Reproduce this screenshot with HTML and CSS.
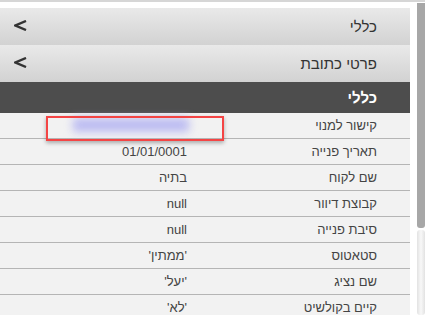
FILE: index.html
```html
<!DOCTYPE html>
<html lang="he">
<head>
    <meta charset="UTF-8">
    <title>פרטי פנייה</title>
    <link rel="stylesheet" href="styles.css">
</head>
<body>
    <div class="frame">
        <div class="panel" dir="rtl">
            <div class="acc-head">
                <span>כללי</span>
                <svg class="chev" width="13" height="11" viewBox="0 0 13 11"><polyline points="12,1 1.5,5.5 12,10" fill="none" stroke="#333" stroke-width="2.4"/></svg>
            </div>
            <div class="acc-head">
                <span>פרטי כתובת</span>
                <svg class="chev" width="13" height="11" viewBox="0 0 13 11"><polyline points="12,1 1.5,5.5 12,10" fill="none" stroke="#333" stroke-width="2.4"/></svg>
            </div>
            <div class="section-title">כללי</div>

            <div class="row">
                <div class="label">קישור למנוי</div>
                <div class="value"><span class="blurred"></span></div>
                <div class="mark"></div>
            </div>
            <div class="row">
                <div class="label">תאריך פנייה</div>
                <div class="value">01/01/0001</div>
            </div>
            <div class="row">
                <div class="label">שם לקוח</div>
                <div class="value">בתיה</div>
            </div>
            <div class="row">
                <div class="label">קבוצת דיוור</div>
                <div class="value">null</div>
            </div>
            <div class="row">
                <div class="label">סיבת פנייה</div>
                <div class="value">null</div>
            </div>
            <div class="row">
                <div class="label">סטאטוס</div>
                <div class="value">'ממתין'</div>
            </div>
            <div class="row">
                <div class="label">שם נציג</div>
                <div class="value">'יעל'</div>
            </div>
            <div class="row">
                <div class="label">קיים בקולשיט</div>
                <div class="value">'לא'</div>
            </div>
        </div>
        <div class="scrollbar">
            <div class="thumb"></div>
            <div class="track"></div>
        </div>
    </div>
</body>
</html>
```

FILE: styles.css
```css
body {
    margin: 0;
    padding: 0;
    background-color: #fff;
    font-family: Arial, "Liberation Sans", sans-serif;
    overflow: hidden;
}
.frame {
    display: flex;
    height: 313px;
    border-top: 2px solid #d6d6d6;
    overflow: hidden;
}
.panel {
    width: 410px;
    margin-top: 6px;
    background-color: #f2f2f2;
}
.acc-head {
    display: flex;
    justify-content: space-between;
    align-items: center;
    height: 37px;
    padding: 0 33px 0 14px;
    background: linear-gradient(#e9e9e9, #d2d2d2);
    color: #333;
    font-size: 15px;
}
.chev {
    display: block;
    margin-top: -2px;
}
.section-title {
    height: 31px;
    line-height: 31px;
    padding-right: 33px;
    background-color: #4d4d4d;
    color: #fff;
    font-size: 15px;
    font-weight: bold;
}
.row {
    position: relative;
    display: flex;
    height: 25px;
    line-height: 25px;
    border-bottom: 1px solid #b5b5b5;
    font-size: 13px;
    color: #444;
}
.label {
    width: 187px;
    padding-right: 33px;
}
.value {
    flex: 1;
    padding-right: 3px;
}
.blurred {
    display: inline-block;
    width: 116px;
    height: 14px;
    margin-top: 5px;
    margin-right: -2px;
    vertical-align: top;
    background-color: #bcbcf2;
    filter: blur(4px);
}
.mark {
    position: absolute;
    left: 46px;
    top: 3px;
    width: 174px;
    height: 21px;
    border: 2px solid #f44545;
    box-shadow: 0 2px 4px rgba(0, 0, 0, 0.3);
}
.scrollbar {
    display: flex;
    flex-direction: column;
    width: 8px;
    margin-left: 7px;
    margin-top: 1px;
}
.thumb {
    height: 225px;
    background-color: #a7a7a7;
    border-radius: 0 0 3px 3px;
}
.track {
    flex: 1;
    margin-top: 2px;
    background: linear-gradient(to right, #e2e2e2, #f8f8f8 50%, #e2e2e2);
    border-radius: 3px;
}
```
